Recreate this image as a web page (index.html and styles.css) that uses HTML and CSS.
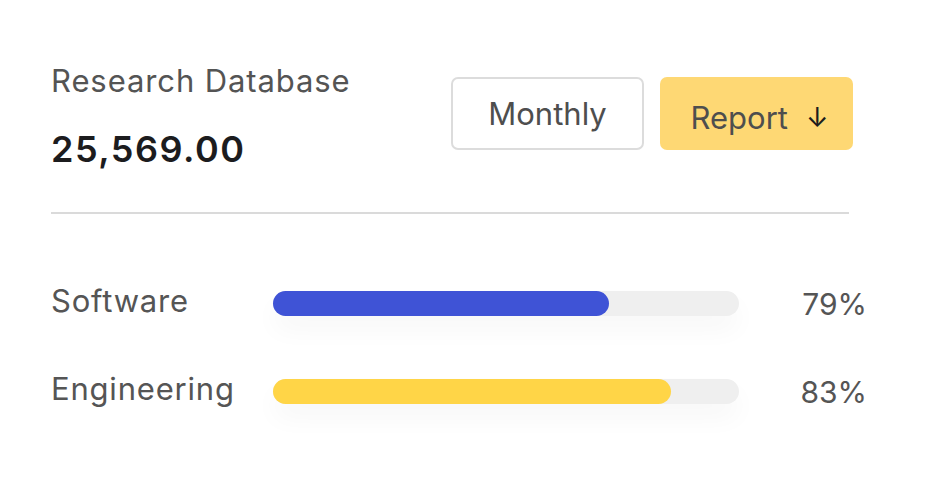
FILE: index.html
```html
<!DOCTYPE html>
<html>
<head>
<meta charset="utf-8">
<link rel="stylesheet" href="styles.css">
</head>
<body>
<div class="card">
  <div class="header">
    <div class="summary">
      <div class="title">Research Database</div>
      <div class="value">25,569.00</div>
    </div>
    <div class="actions">
      <button class="btn btn-outline">Monthly</button>
      <button class="btn btn-report">Report <span class="arrow">↓</span></button>
    </div>
  </div>
  <div class="divider"></div>
  <div class="stats">
    <div class="row">
      <div class="label">Software</div>
      <div class="track"><div class="fill fill-blue" style="width:72%"></div></div>
      <div class="pct">79%</div>
    </div>
    <div class="row">
      <div class="label">Engineering</div>
      <div class="track"><div class="fill fill-yellow" style="width:85.4%"></div></div>
      <div class="pct">83%</div>
    </div>
  </div>
</div>
</body>
</html>
```
FILE: styles.css
```css
* { box-sizing: border-box; }
html, body { margin: 0; padding: 0; background: #ffffff; }
body {
  font-family: Inter, "Noto Sans", "Liberation Sans", sans-serif;
  width: 943px;
  height: 480px;
  overflow: hidden;
}
.card {
  padding: 63px 0 0 51px;
}
.header {
  display: flex;
  justify-content: space-between;
  width: 802px;
}
.title {
  font-size: 31px;
  line-height: 36px;
  color: #545454;
  font-weight: 400;
  letter-spacing: 0.9px;
}
.value {
  margin-top: 30px;
  font-size: 36px;
  line-height: 40px;
  font-weight: 600;
  color: #1c1c1e;
  letter-spacing: 1.5px;
}
.actions {
  display: flex;
  gap: 16px;
  padding-top: 14px;
}
.btn {
  width: 193px;
  height: 73px;
  border-radius: 7px;
  font-family: inherit;
  font-size: 31px;
  color: #4e4e4e;
  display: flex;
  align-items: center;
  justify-content: center;
  padding: 0;
}
.btn-outline {
  background: #ffffff;
  border: 2px solid #dcdcdc;
}
.btn-report {
  background: #fed874;
  border: none;
  padding-top: 8px;
  padding-left: 6px;
  gap: 18px;
}
.arrow {
  color: #1c1c1c;
  font-size: 27px;
}
.divider {
  margin-top: 43px;
  width: 798px;
  height: 2px;
  background: #dadada;
}
.stats {
  margin-top: 77px;
  display: flex;
  flex-direction: column;
  gap: 63px;
}
.row {
  display: flex;
  align-items: center;
  height: 25px;
  width: 816px;
}
.label {
  width: 222px;
  font-size: 31px;
  color: #555555;
  letter-spacing: 0.8px;
  margin-top: -7px;
}
.track {
  width: 466px;
  height: 25px;
  border-radius: 13px;
  background: #efefef;
  box-shadow: 0 14px 26px rgba(0, 0, 0, 0.035);
}
.fill {
  height: 100%;
  border-radius: 13px;
}
.fill-blue { background: #3f53d6; }
.fill-yellow { background: #ffd547; }
.pct {
  flex: 1;
  text-align: right;
  font-size: 30px;
  color: #555555;
}
```
